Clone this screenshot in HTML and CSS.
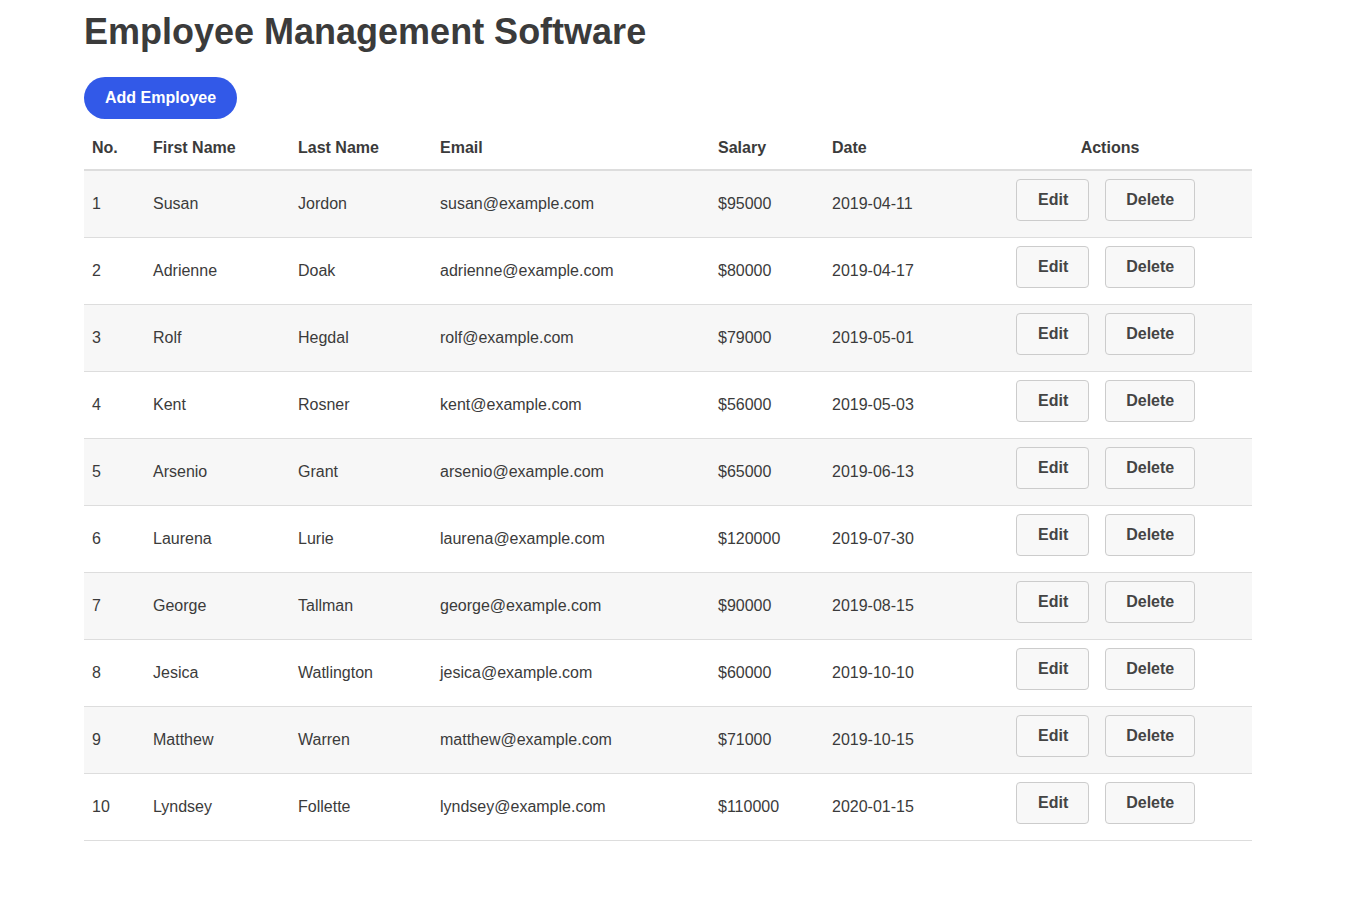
FILE: index.html
```html
<!DOCTYPE html>
<html lang="en">
<head>
<meta charset="utf-8">
<title>Employee Management Software</title>
<link rel="stylesheet" href="styles.css">
</head>
<body>
<div class="container">
  <h1 class="title">Employee Management Software</h1>
  <button class="btn-primary">Add Employee</button>
  <table class="emp-table">
    <thead>
      <tr>
        <th class="c-no">No.</th>
        <th class="c-first">First Name</th>
        <th class="c-last">Last Name</th>
        <th class="c-email">Email</th>
        <th class="c-salary">Salary</th>
        <th class="c-date">Date</th>
        <th class="c-actions">Actions</th>
      </tr>
    </thead>
    <tbody>
      <tr><td>1</td><td>Susan</td><td>Jordon</td><td>susan@example.com</td><td>$95000</td><td>2019-04-11</td><td class="actions"><button class="btn btn-edit">Edit</button><button class="btn">Delete</button></td></tr>
      <tr><td>2</td><td>Adrienne</td><td>Doak</td><td>adrienne@example.com</td><td>$80000</td><td>2019-04-17</td><td class="actions"><button class="btn btn-edit">Edit</button><button class="btn">Delete</button></td></tr>
      <tr><td>3</td><td>Rolf</td><td>Hegdal</td><td>rolf@example.com</td><td>$79000</td><td>2019-05-01</td><td class="actions"><button class="btn btn-edit">Edit</button><button class="btn">Delete</button></td></tr>
      <tr><td>4</td><td>Kent</td><td>Rosner</td><td>kent@example.com</td><td>$56000</td><td>2019-05-03</td><td class="actions"><button class="btn btn-edit">Edit</button><button class="btn">Delete</button></td></tr>
      <tr><td>5</td><td>Arsenio</td><td>Grant</td><td>arsenio@example.com</td><td>$65000</td><td>2019-06-13</td><td class="actions"><button class="btn btn-edit">Edit</button><button class="btn">Delete</button></td></tr>
      <tr><td>6</td><td>Laurena</td><td>Lurie</td><td>laurena@example.com</td><td>$120000</td><td>2019-07-30</td><td class="actions"><button class="btn btn-edit">Edit</button><button class="btn">Delete</button></td></tr>
      <tr><td>7</td><td>George</td><td>Tallman</td><td>george@example.com</td><td>$90000</td><td>2019-08-15</td><td class="actions"><button class="btn btn-edit">Edit</button><button class="btn">Delete</button></td></tr>
      <tr><td>8</td><td>Jesica</td><td>Watlington</td><td>jesica@example.com</td><td>$60000</td><td>2019-10-10</td><td class="actions"><button class="btn btn-edit">Edit</button><button class="btn">Delete</button></td></tr>
      <tr><td>9</td><td>Matthew</td><td>Warren</td><td>matthew@example.com</td><td>$71000</td><td>2019-10-15</td><td class="actions"><button class="btn btn-edit">Edit</button><button class="btn">Delete</button></td></tr>
      <tr><td>10</td><td>Lyndsey</td><td>Follette</td><td>lyndsey@example.com</td><td>$110000</td><td>2020-01-15</td><td class="actions"><button class="btn btn-edit">Edit</button><button class="btn">Delete</button></td></tr>
    </tbody>
  </table>
</div>
</body>
</html>
```
FILE: styles.css
```css
html, body {
  margin: 0;
  padding: 0;
  background: #ffffff;
}
body {
  font-family: "Liberation Sans", Arial, sans-serif;
  font-size: 16px;
  color: #3b3b3b;
}
.container {
  width: 1168px;
  margin-left: 84px;
  padding-top: 11px;
}
.title {
  margin: 0 0 25px 0;
  font-size: 36px;
  line-height: 41px;
  font-weight: bold;
  color: #3b3b3b;
}
.btn-primary {
  display: block;
  height: 42px;
  padding: 0 21px;
  border: none;
  border-radius: 21px;
  background: #3259e8;
  color: #ffffff;
  font-family: "Liberation Sans", Arial, sans-serif;
  font-size: 16px;
  font-weight: bold;
  line-height: 18px;
  margin: 0 0 6px 0;
  cursor: pointer;
}
.emp-table {
  width: 1168px;
  border-collapse: collapse;
  table-layout: fixed;
}
.emp-table th {
  text-align: left;
  font-weight: bold;
  height: 45px;
  padding: 2px 8px 0 8px;
  box-sizing: border-box;
  line-height: 18px;
  vertical-align: middle;
  border-bottom: 2px solid #dddddd;
}
.emp-table th.c-actions {
  text-align: center;
}
.c-no { width: 61px; }
.c-first { width: 145px; }
.c-last { width: 142px; }
.c-email { width: 278px; }
.c-salary { width: 114px; }
.c-date { width: 144px; }
.c-actions { width: 284px; }
.emp-table td {
  padding: 8px;
  line-height: 18px;
  vertical-align: middle;
  border-bottom: 1px solid #dddddd;
}
.emp-table tbody tr:nth-child(odd) {
  background: #f7f7f7;
}
.emp-table td.actions {
  padding-left: 48px;
  white-space: nowrap;
  font-size: 0;
}
.btn {
  height: 42px;
  padding: 0 20px;
  margin: 0 16px 8px 0;
  border: 1px solid #cccccc;
  border-radius: 4px;
  background: #f8f8f8;
  color: #444444;
  font-family: "Liberation Sans", Arial, sans-serif;
  font-size: 16px;
  font-weight: bold;
  line-height: 18px;
  vertical-align: top;
  cursor: pointer;
}
.btn-edit {
  padding: 0 20px 0 21px;
}
```
